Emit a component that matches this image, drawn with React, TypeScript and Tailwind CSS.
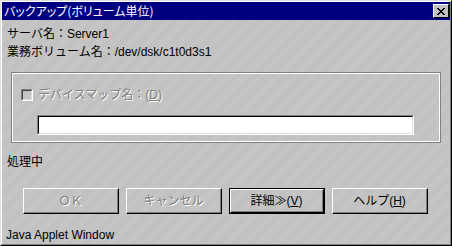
import React from "react";

const font = "font-['Liberation_Sans','Noto_Sans_CJK_JP',sans-serif]";

function Btn({
  children,
  disabled,
  def,
}: {
  children: React.ReactNode;
  disabled?: boolean;
  def?: boolean;
}) {
  const inner = (
    <div className="w-full h-full border-t border-l border-t-white border-l-white border-r border-b border-r-black border-b-black">
      <div className="w-full h-full border-r border-b border-r-[#808080] border-b-[#808080] flex items-center justify-center">
        <span
          className={
            disabled
              ? "text-[#808080] [text-shadow:1px_1px_0_#ffffff]"
              : "text-black"
          }
        >
          {children}
        </span>
      </div>
    </div>
  );
  return (
    <div
      className={
        "w-[96px] h-[26px] " + (def ? "border border-black" : "")
      }
    >
      {inner}
    </div>
  );
}

export default function App() {
  return (
    <div
      className={
        "w-[452px] h-[246px] text-[12px] leading-[18px] text-black " + font
      }
    >
      <div className="w-full h-full border-t border-l border-t-[#dfdfdf] border-l-[#dfdfdf] border-r border-b border-r-black border-b-black">
        <div className="w-full h-full border-t border-l border-t-white border-l-white border-r border-b border-r-[#808080] border-b-[#808080] bg-[repeating-linear-gradient(135deg,#c8c8c8_0px,#c8c8c8_1px,#bebebe_1px,#bebebe_2px)] flex flex-col">
          {/* Title bar */}
          <div className="h-[18px] bg-[#000080] flex items-center justify-between pl-[2px] pr-[1px]">
            <span className="text-white text-[12px] leading-[18px] [font-feature-settings:'palt'] font-['Noto_Sans_CJK_JP',sans-serif]">
              バックアップ(ボリューム単位)
            </span>
            <div className="w-[16px] h-[14px] bg-[#c0c0c0] border-t border-l border-t-white border-l-white border-r border-b border-r-black border-b-black flex items-center justify-center">
              <svg width="10" height="9" viewBox="0 0 10 9">
                <path
                  d="M1 1 L8 8 M2 1 L9 8 M8 1 L1 8 M9 1 L2 8"
                  stroke="black"
                  strokeWidth="1"
                  fill="none"
                  shapeRendering="crispEdges"
                />
              </svg>
            </div>
          </div>

          {/* Info lines */}
          <div className="pl-[5px] mt-[5px]">
            <div>サーバ名：Server1</div>
            <div>業務ボリューム名：/dev/dsk/c1t0d3s1</div>
          </div>

          {/* Group box */}
          <div className="ml-[9px] mr-[9px] mt-[11px] h-[72px] border border-[#808080]">
            <div className="w-full h-full border border-white flex flex-col pl-[8px]">
              <div className="flex items-center mt-[14px] h-[14px]">
                <div className="w-[12px] h-[12px] border-t border-l border-t-[#808080] border-l-[#808080] border-r border-b border-r-white border-b-white">
                  <div className="w-full h-full border-t border-l border-t-[#404040] border-l-[#404040] border-r border-b border-r-[#dfdfdf] border-b-[#dfdfdf]" />
                </div>
                <span className="ml-[5px] text-[#808080] [text-shadow:1px_1px_0_#ffffff]">
                  デバイスマップ名：(<span className="underline">D</span>)
                </span>
              </div>
              <div className="ml-[16px] mt-[13px] w-[377px] h-[20px] border-t border-l border-t-[#808080] border-l-[#808080] border-r border-b border-r-white border-b-white">
                <div className="w-full h-full bg-white border-t border-l border-t-black border-l-black border-r border-b border-r-[#dfdfdf] border-b-[#dfdfdf]" />
              </div>
            </div>
          </div>

          {/* Status */}
          <div className="pl-[5px] mt-[10px]">処理中</div>

          {/* Buttons */}
          <div className="flex gap-[7px] pl-[21px] mt-[17px]">
            <Btn disabled>ＯＫ</Btn>
            <Btn disabled>キャンセル</Btn>
            <Btn def>
              詳細≫(<span className="underline">V</span>)
            </Btn>
            <Btn>
              ヘルプ(<span className="underline">H</span>)
            </Btn>
          </div>

          {/* Footer */}
          <div className="pl-[4px] mt-[12px]">Java Applet Window</div>
        </div>
      </div>
    </div>
  );
}
